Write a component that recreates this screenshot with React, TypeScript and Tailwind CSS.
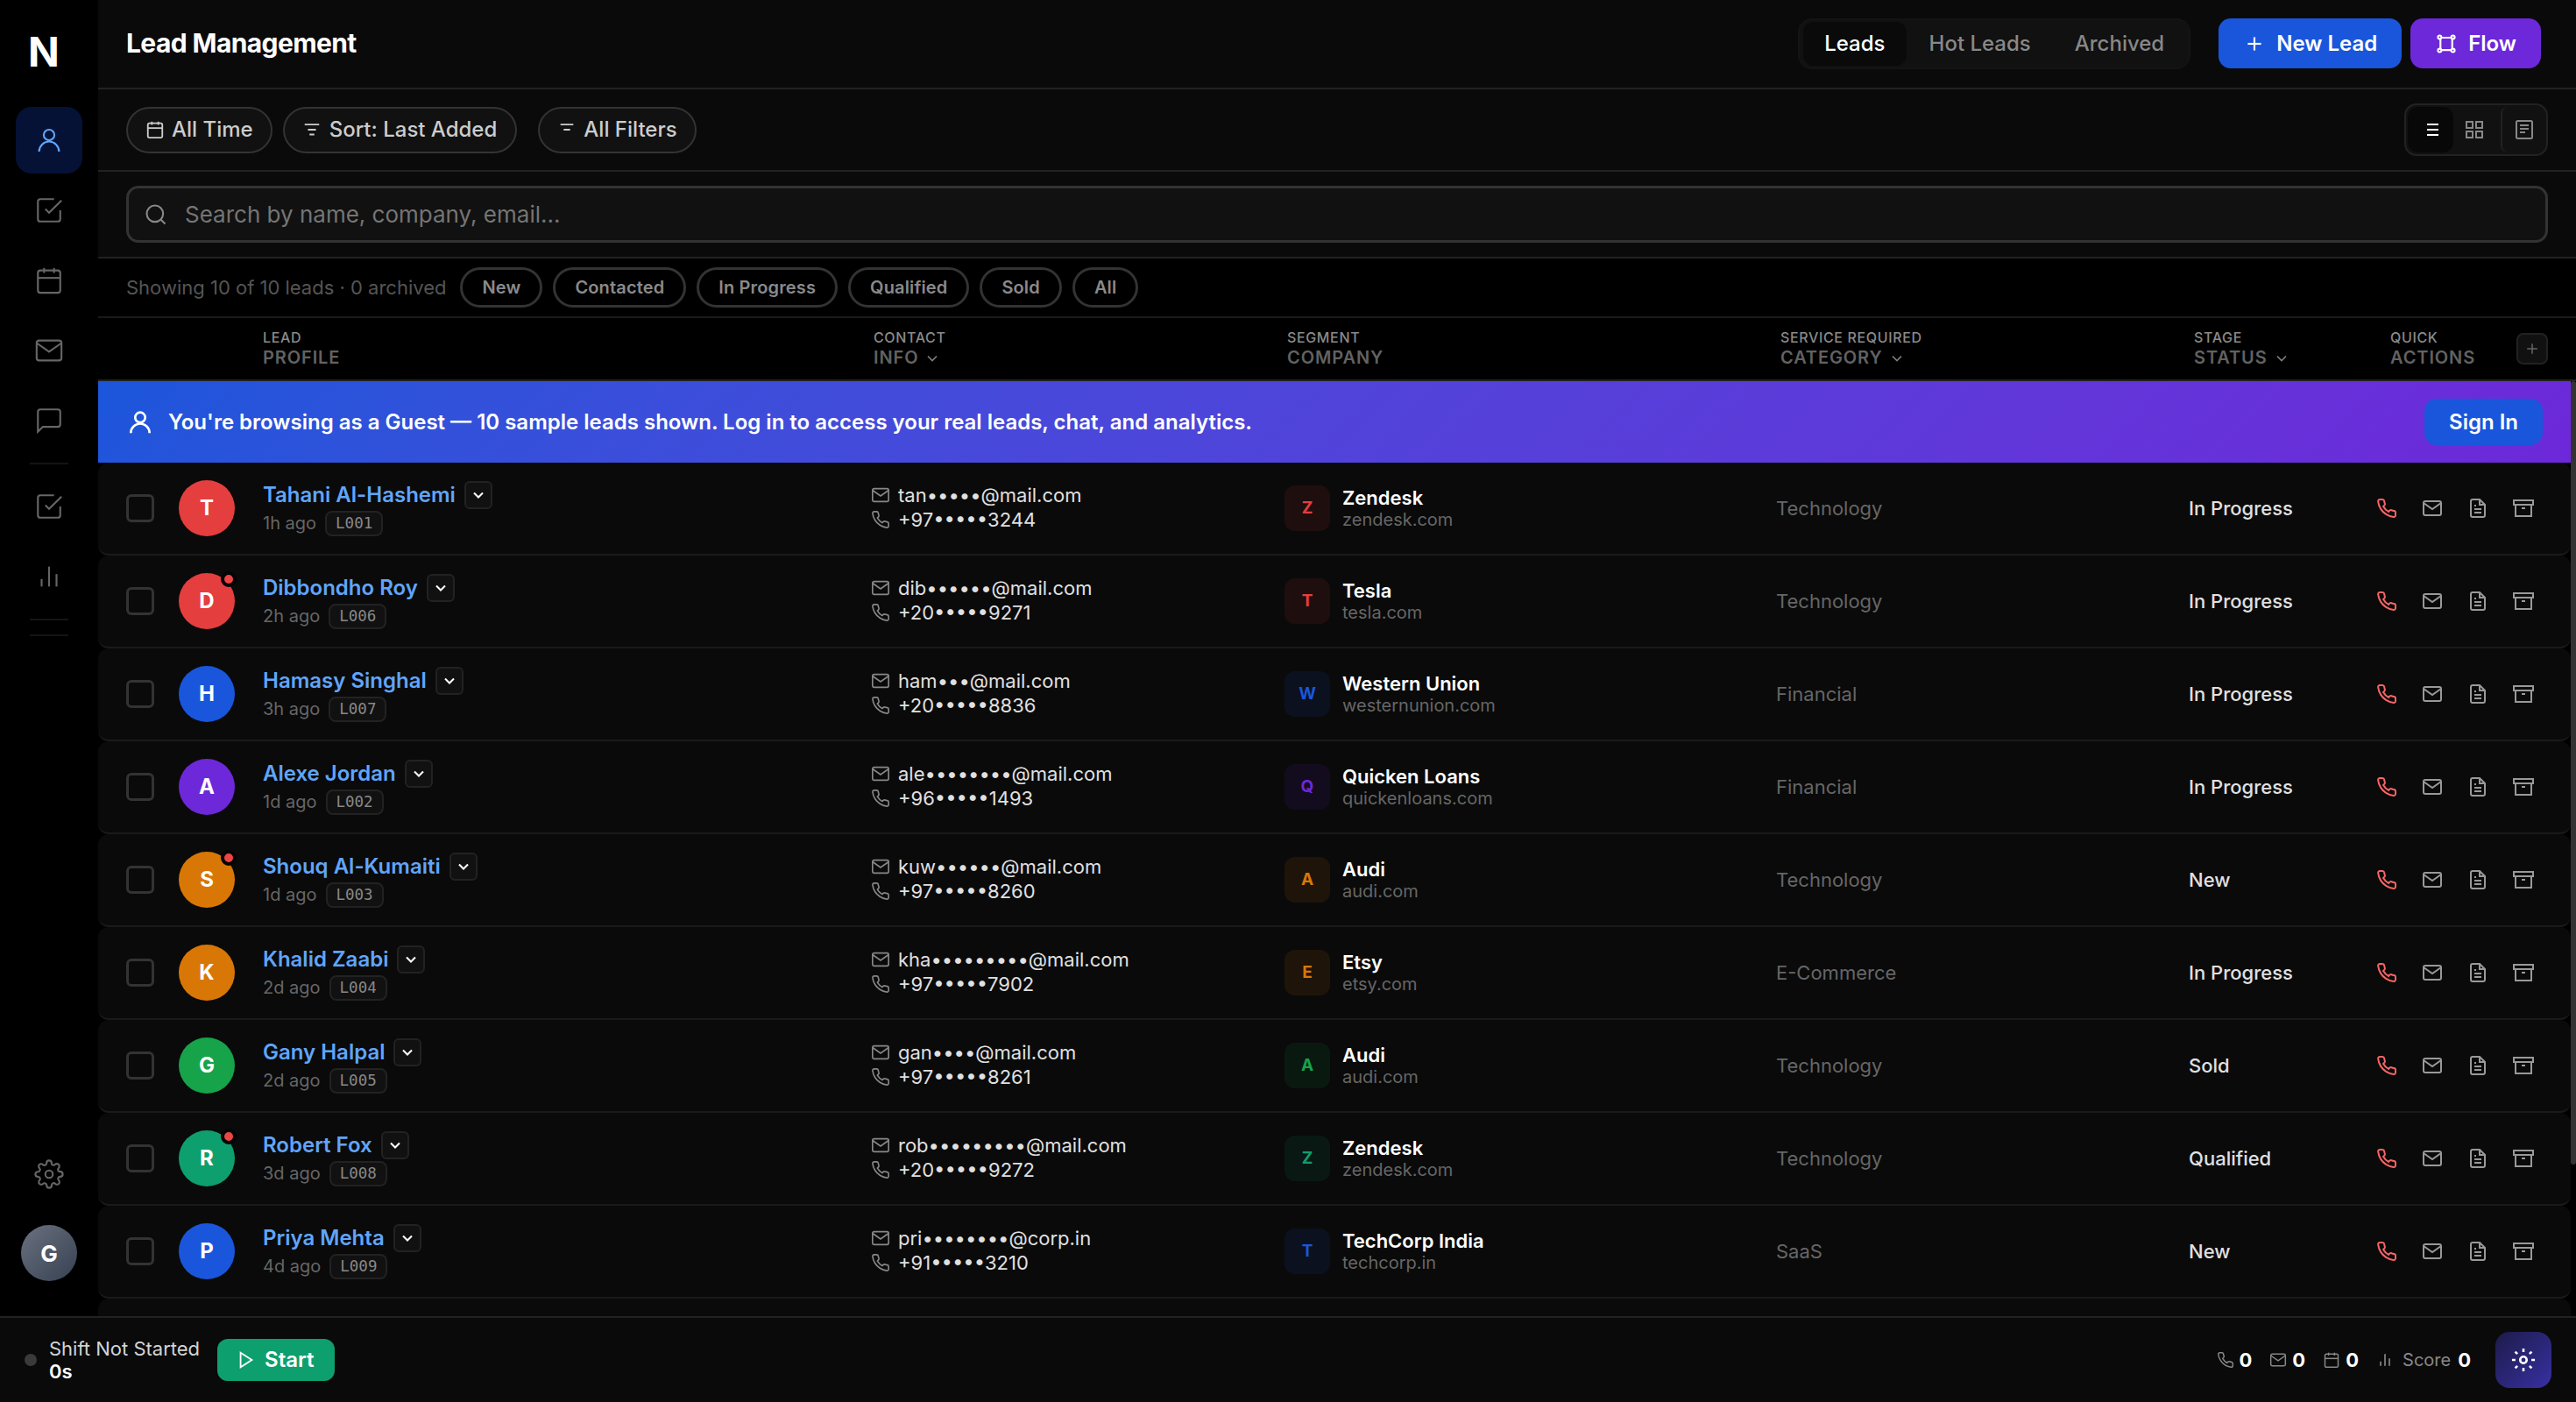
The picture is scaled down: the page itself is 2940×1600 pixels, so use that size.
import React, { useState } from 'react';
import {
  FiArchive,
  FiBarChart2,
  FiCalendar,
  FiCheckSquare,
  FiChevronDown,
  FiFileText,
  FiGrid,
  FiMail,
  FiMessageSquare,
  FiPhone,
  FiPlay,
  FiPlus,
  FiSearch,
  FiSettings,
} from 'react-icons/fi';

// --- types & data ---
interface Lead {
  id: string;
  name: string;
  ago: string;
  email: string;
  phone: string;
  company: string;
  domain: string;
  category: string;
  status: string;
  color: string;
  unread?: boolean;
}

const avatarColors: { [key: string]: string } = {
  red: 'bg-[#e53e3e]',
  blue: 'bg-[#1a56db]',
  purple: 'bg-[#6d28d9]',
  orange: 'bg-[#d97706]',
  green: 'bg-[#16a34a]',
  teal: 'bg-[#0e9f6e]',
};

const companyColors: { [key: string]: string } = {
  red: 'bg-[#e53e3e]/10 text-[#e53e3e]',
  blue: 'bg-[#1a56db]/10 text-[#1a56db]',
  purple: 'bg-[#6d28d9]/10 text-[#6d28d9]',
  orange: 'bg-[#d97706]/10 text-[#d97706]',
  green: 'bg-[#16a34a]/10 text-[#16a34a]',
  teal: 'bg-[#0e9f6e]/10 text-[#0e9f6e]',
};

const LEADS: Lead[] = [
  { id: 'L001', name: 'Tahani Al-Hashemi', ago: '1h ago', email: 'tan•••••@mail.com', phone: '+97•••••3244', company: 'Zendesk', domain: 'zendesk.com', category: 'Technology', status: 'In Progress', color: 'red' },
  { id: 'L006', name: 'Dibbondho Roy', ago: '2h ago', email: 'dib••••••@mail.com', phone: '+20•••••9271', company: 'Tesla', domain: 'tesla.com', category: 'Technology', status: 'In Progress', color: 'red', unread: true },
  { id: 'L007', name: 'Hamasy Singhal', ago: '3h ago', email: 'ham•••@mail.com', phone: '+20•••••8836', company: 'Western Union', domain: 'westernunion.com', category: 'Financial', status: 'In Progress', color: 'blue' },
  { id: 'L002', name: 'Alexe Jordan', ago: '1d ago', email: 'ale••••••••@mail.com', phone: '+96•••••1493', company: 'Quicken Loans', domain: 'quickenloans.com', category: 'Financial', status: 'In Progress', color: 'purple' },
  { id: 'L003', name: 'Shouq Al-Kumaiti', ago: '1d ago', email: 'kuw••••••@mail.com', phone: '+97•••••8260', company: 'Audi', domain: 'audi.com', category: 'Technology', status: 'New', color: 'orange', unread: true },
  { id: 'L004', name: 'Khalid Zaabi', ago: '2d ago', email: 'kha•••••••••@mail.com', phone: '+97•••••7902', company: 'Etsy', domain: 'etsy.com', category: 'E-Commerce', status: 'In Progress', color: 'orange' },
  { id: 'L005', name: 'Gany Halpal', ago: '2d ago', email: 'gan••••@mail.com', phone: '+97•••••8261', company: 'Audi', domain: 'audi.com', category: 'Technology', status: 'Sold', color: 'green' },
  { id: 'L008', name: 'Robert Fox', ago: '3d ago', email: 'rob•••••••••@mail.com', phone: '+20•••••9272', company: 'Zendesk', domain: 'zendesk.com', category: 'Technology', status: 'Qualified', color: 'teal', unread: true },
  { id: 'L009', name: 'Priya Mehta', ago: '4d ago', email: 'pri••••••••@corp.in', phone: '+91•••••3210', company: 'TechCorp India', domain: 'techcorp.in', category: 'SaaS', status: 'New', color: 'blue' },
];

const TABS = ['Leads', 'Hot Leads', 'Archived'];
const STATUS_CHIPS = ['New', 'Contacted', 'In Progress', 'Qualified', 'Sold', 'All'];

// shared stroke settings for the line icons
const sharp = { strokeLinecap: 'butt', strokeLinejoin: 'miter' } as const;

// --- custom icons ---
interface IconProps {
  size: number;
  stroke?: number;
  children: React.ReactNode;
}

const Svg = ({ size, stroke = 2, children }: IconProps) => (
  <svg width={size} height={size} viewBox="0 0 24 24" fill="none" stroke="currentColor" strokeWidth={stroke} className="shrink-0">
    {children}
  </svg>
);

const PersonIcon = ({ size, stroke }: { size: number; stroke: number }) => (
  <Svg size={size} stroke={stroke}>
    <circle cx="12" cy="7.8" r="4.3" />
    <path d="M4 21.1a8 8 0 0 1 16 0" />
  </Svg>
);

// --- sidebar ---
const NavItem = ({ active, children }: { active?: boolean; children: React.ReactNode }) => (
  <button
    className={`flex size-[76px] items-center justify-center rounded-[18px] ${active ? 'bg-[#051236] text-[#60a5fa]' : 'text-[#666]'}`}
  >
    {children}
  </button>
);

const Sidebar = () => (
  <aside className="flex w-28 shrink-0 flex-col items-center bg-black pb-10">
    <div className="flex h-[122px] w-full shrink-0 items-start pt-[30px] pl-8 text-[47px] leading-[58px] font-bold text-white">N</div>
    <nav className="flex flex-col items-center gap-1">
      <NavItem active><PersonIcon size={34} stroke={1.5} /></NavItem>
      <NavItem><FiCheckSquare size={34} strokeWidth={1.5} {...sharp} /></NavItem>
      <NavItem><FiCalendar size={34} strokeWidth={1.5} {...sharp} /></NavItem>
      <NavItem><FiMail size={34} strokeWidth={1.5} {...sharp} /></NavItem>
      <NavItem><FiMessageSquare size={34} strokeWidth={1.5} {...sharp} /></NavItem>
      <div className="my-1.5 h-0.5 w-11 bg-[#141414]" />
      <NavItem><FiCheckSquare size={34} strokeWidth={1.5} {...sharp} /></NavItem>
      <NavItem><FiBarChart2 size={34} strokeWidth={1.5} {...sharp} /></NavItem>
      <div className="my-1.5 h-0.5 w-11 bg-[#141414]" />
      <div className="my-1.5 h-0.5 w-11 bg-[#141414]" />
    </nav>
    <div className="mt-auto flex flex-col items-center gap-5">
      <NavItem><FiSettings size={34} strokeWidth={1.5} {...sharp} /></NavItem>
      <div className="flex size-16 items-center justify-center rounded-full bg-linear-135 from-[#6b7280] to-[#374151] text-[26px] font-bold text-white">
        G
      </div>
    </div>
  </aside>
);

// --- table header cell ---
const HeadCell = ({ top, bottom, sortable }: { top: string; bottom: string; sortable?: boolean }) => (
  <div className="flex flex-col pb-px">
    <span className="text-base leading-[22px] font-medium tracking-[0.04em] text-[#8a8a8a]">{top}</span>
    <span className="flex items-center gap-1.5 text-xl leading-[25px] font-semibold tracking-[0.045em] text-[#626262]">
      {bottom}
      {sortable && <FiChevronDown size={20} className="text-[#808080]" {...sharp} />}
    </span>
  </div>
);

// --- one lead ---
const LeadRow = ({ lead }: { lead: Lead }) => (
  <div className="grid h-[106px] grid-cols-[60px_96px_694px_472px_561px_471px_204px_200px] items-center rounded-xl border-b-2 border-[#1a1a1a] bg-[#0a0a0a] px-8">
    <div className="size-8 rounded-md border-[3px] border-[#333]" />
    <div className={`relative flex size-16 items-center justify-center rounded-full text-2xl font-bold text-white ${avatarColors[lead.color]}`}>
      {lead.name[0]}
      {lead.unread && <span className="absolute -top-0.5 -right-0.5 size-[18px] rounded-full border-4 border-[#050505] bg-[#ef4444]" />}
    </div>
    <div className="flex flex-col gap-0.5">
      <div className="flex items-center gap-2.5">
        <span className="text-2xl leading-8 font-semibold text-[#60a5fa]">{lead.name}</span>
        <button className="flex size-8 items-center justify-center rounded-md border-2 border-[#222] bg-[#111] text-white">
          <FiChevronDown size={20} strokeWidth={2.5} {...sharp} />
        </button>
      </div>
      <div className="flex items-center gap-2.5">
        <span className="text-xl leading-7 text-[#666]">{lead.ago}</span>
        <span className="rounded-lg border-2 border-[#222] bg-[#111] px-2.5 font-['DejaVu_Sans_Mono',monospace] text-[17.5px] leading-[25px] text-[#888]">
          {lead.id}
        </span>
      </div>
    </div>
    <div className="flex flex-col pb-0.5 text-[22px] leading-7 text-[#e0e0e0]">
      <div className="flex items-center gap-[9px]">
        <FiMail size={22} strokeWidth={1.8} className="text-[#888]" {...sharp} />
        {lead.email}
      </div>
      <div className="flex items-center gap-[9px]">
        <FiPhone size={22} strokeWidth={1.8} className="text-[#888]" {...sharp} />
        {lead.phone}
      </div>
    </div>
    <div className="flex items-center gap-3.5">
      <div className={`flex size-[52px] items-center justify-center rounded-xl text-[19px] font-bold ${companyColors[lead.color]}`}>
        {lead.company[0]}
      </div>
      <div className="flex flex-col">
        <span className="text-[22px] leading-[26px] font-semibold text-white">{lead.company}</span>
        <span className="text-xl leading-6 text-[#666]">{lead.domain}</span>
      </div>
    </div>
    <span className="text-[22px] text-[#666]">{lead.category}</span>
    <span className="text-[22px] font-medium text-[#e0e0e0]">{lead.status}</span>
    <div className="flex gap-2 text-[#999]">
      <button className="flex size-11 items-center justify-center text-[#f86565]"><FiPhone size={24} {...sharp} /></button>
      <button className="flex size-11 items-center justify-center"><FiMail size={24} {...sharp} /></button>
      <button className="flex size-11 items-center justify-center"><FiFileText size={24} {...sharp} /></button>
      <button className="flex size-11 items-center justify-center"><FiArchive size={24} {...sharp} /></button>
    </div>
  </div>
);

export default function App() {
  const [tab, setTab] = useState(TABS[0]);

  return (
    <div className="flex h-[1600px] w-[2940px] flex-col overflow-hidden bg-black font-['Inter',sans-serif] text-white">
      <div className="flex h-[1502px]">
        <Sidebar />

        <main className="flex min-w-0 flex-1 flex-col">
          {/* title bar */}
          <header className="flex h-[102px] shrink-0 items-center border-b-2 border-[#222] bg-[#0a0a0a] pr-10 pb-px pl-8">
            <h1 className="mr-auto text-[30px] font-bold tracking-[-0.02em]">Lead Management</h1>
            <div className="mr-8 flex h-[58px] items-center gap-0.5 rounded-2xl border-2 border-[#141414] bg-[#111] px-1">
              {TABS.map((t) => (
                <button
                  key={t}
                  onClick={() => setTab(t)}
                  className={`h-[50px] rounded-xl px-6 text-2xl font-medium ${t === tab ? 'bg-[#0a0a0a] text-white' : 'text-[#888]'}`}
                >
                  {t}
                </button>
              ))}
            </div>
            <button className="mr-2.5 flex h-[57px] items-center gap-3 rounded-[14px] bg-[#1a56db] px-7 text-2xl font-semibold">
              <FiPlus size={26} {...sharp} />
              New Lead
            </button>
            <button className="flex h-[57px] items-center gap-3 rounded-[14px] bg-[#6d28d9] px-7 text-2xl font-semibold">
              <Svg size={26}>
                <circle cx="5" cy="5" r="1.8" />
                <circle cx="19" cy="5" r="1.8" />
                <circle cx="5" cy="19" r="1.8" />
                <circle cx="19" cy="19" r="1.8" />
                <path d="M7 5.5h10M7 18.5h10M5.8 7v10M18.2 7v10" />
              </Svg>
              Flow
            </button>
          </header>

          {/* filters */}
          <div className="flex h-[94px] shrink-0 items-center border-b-2 border-[#222] bg-[#0a0a0a] px-8 text-2xl font-medium text-[#ccc]">
            <button className="mr-3 flex h-[53px] items-center gap-2 rounded-full border-2 border-[#333] bg-[#111] px-5">
              <FiCalendar size={22} {...sharp} />
              All Time
            </button>
            <button className="mr-6 flex h-[53px] items-center gap-[9px] rounded-full border-2 border-[#333] bg-[#111] pr-[21px] pl-5">
              <Svg size={22}><path d="M3 5.5h18M7 12h10M9 18h6" /></Svg>
              Sort: Last Added
            </button>
            <button className="flex h-[53px] items-center gap-2 rounded-full border-2 border-[#333] bg-[#111] px-5">
              <Svg size={22}><path d="M4 5.5h16M8 12h8" /></Svg>
              All Filters
            </button>
            <div className="ml-auto flex h-[60px] items-stretch rounded-[14px] border-2 border-[#222] bg-[#111] py-0.5 pl-0.5 text-[#888]">
              <button className="flex w-[52px] items-center justify-center rounded-xl bg-[#080808] text-white">
                <Svg size={24}><path d="M8 6h13M8 12h13M8 18h13" /></Svg>
              </button>
              <button className="mr-1.5 flex w-12 items-center justify-center"><FiGrid size={24} {...sharp} /></button>
              <button className="flex w-[52px] items-center justify-center rounded-lg border-l-2 border-[#222]">
                <Svg size={24}>
                  <rect x="3" y="2" width="18" height="20" rx="1.5" />
                  <path d="M7 7h10M7 11h10M7 15h6" />
                </Svg>
              </button>
            </div>
          </div>

          {/* search */}
          <div className="flex h-[99px] shrink-0 items-center border-b-2 border-[#222] bg-[#0a0a0a] px-8">
            <div className="flex h-[65px] w-full items-center gap-[19px] rounded-[14px] border-[3px] border-[#333] bg-[#111] px-[17px] text-[26px] text-[#757575]">
              <FiSearch size={28} strokeWidth={1.8} className="text-[#888]" {...sharp} />
              Search by name, company, email...
            </div>
          </div>

          {/* status chips */}
          <div className="flex h-[68px] shrink-0 items-center gap-3 border-b-2 border-[#1a1a1a] px-8">
            <span className="mr-1 text-[22px] text-[#555]">Showing 10 of 10 leads · 0 archived</span>
            {STATUS_CHIPS.map((chip) => (
              <button key={chip} className="h-[46px] rounded-full border-[3px] border-[#333] px-[22px] text-xl font-semibold tracking-[0.007em] text-[#8a8a8a]">
                {chip}
              </button>
            ))}
          </div>

          {/* column heads */}
          <div className="grid h-[72px] shrink-0 grid-cols-[156px_697px_472px_563px_472px_224px_1fr_36px] items-center border-b-2 border-[#222] px-8">
            <span />
            <HeadCell top="LEAD" bottom="PROFILE" />
            <HeadCell top="CONTACT" bottom="INFO" sortable />
            <HeadCell top="SEGMENT" bottom="COMPANY" />
            <HeadCell top="SERVICE REQUIRED" bottom="CATEGORY" sortable />
            <HeadCell top="STAGE" bottom="STATUS" sortable />
            <HeadCell top="QUICK" bottom="ACTIONS" />
            <button className="flex size-9 items-center justify-center rounded-lg border-2 border-[#222] bg-[#111] text-[#666]">
              <FiPlus size={20} strokeWidth={1.8} {...sharp} />
            </button>
          </div>

          {/* list with its scrollbar */}
          <div className="flex min-h-0 flex-1">
            <div className="min-w-0 flex-1 overflow-hidden">
              <div className="flex h-[93px] items-center gap-4 bg-linear-135 from-[#1a56db] to-[#6d28d9] px-8 text-2xl font-semibold">
                <PersonIcon size={32} stroke={2} />
                <span className="mr-auto">You're browsing as a Guest — 10 sample leads shown. Log in to access your real leads, chat, and analytics.</span>
                <button className="h-[53px] rounded-[14px] bg-[#1a56db] px-7">Sign In</button>
              </div>
              {LEADS.map((lead) => (
                <LeadRow key={lead.id} lead={lead} />
              ))}
              <div className="h-[106px] rounded-xl bg-[#0a0a0a]" />
            </div>
            <div className="w-1.5">
              <div className="h-[894px] rounded-full bg-[#333]" />
            </div>
          </div>
        </main>
      </div>

      {/* shift bar */}
      <footer className="flex h-[98px] items-center border-t-2 border-[#222] bg-[#0a0a0a] px-7">
        <span className="mr-3.5 size-3.5 rounded-full bg-[#3a3a3a]" />
        <div className="mr-5 flex flex-col text-[22px] leading-[26px]">
          <span className="text-[#d4d4d4]">Shift Not Started</span>
          <span className="font-semibold">0s</span>
        </div>
        <button className="flex h-12 items-center gap-2.5 rounded-xl bg-[#0e9f6e] pr-6 pl-[22px] text-2xl font-semibold">
          <FiPlay size={22} {...sharp} />
          Start
        </button>

        <div className="ml-auto flex items-center gap-5 text-[22px] font-bold">
          <span className="flex items-center gap-1.5"><FiPhone size={20} strokeWidth={1.8} className="text-[#888]" {...sharp} />0</span>
          <span className="flex items-center gap-1.5"><FiMail size={20} strokeWidth={1.8} className="text-[#888]" {...sharp} />0</span>
          <span className="flex items-center gap-1.5"><FiCalendar size={20} strokeWidth={1.8} className="text-[#888]" {...sharp} />0</span>
          <span className="flex items-center gap-2">
            <FiBarChart2 size={20} className="mr-0.5 text-[#888]" {...sharp} />
            <span className="text-xl font-normal text-[#888]">Score</span>
            0
          </span>
        </div>
        <button className="ml-7 flex size-16 items-center justify-center rounded-2xl bg-linear-135 from-[#1e1b4b] to-[#3730a3]">
          <Svg size={28} stroke={2.2}>
            <circle cx="12" cy="12" r="3.2" />
            <path d="M12 .8v3.4M12 19.8v3.4M.8 12h3.4M19.8 12h3.4M3.9 3.9l2.2 2.2M17.9 17.9l2.2 2.2M3.9 20.1l2.2-2.2M17.9 6.1l2.2-2.2" />
          </Svg>
        </button>
      </footer>
    </div>
  );
}
